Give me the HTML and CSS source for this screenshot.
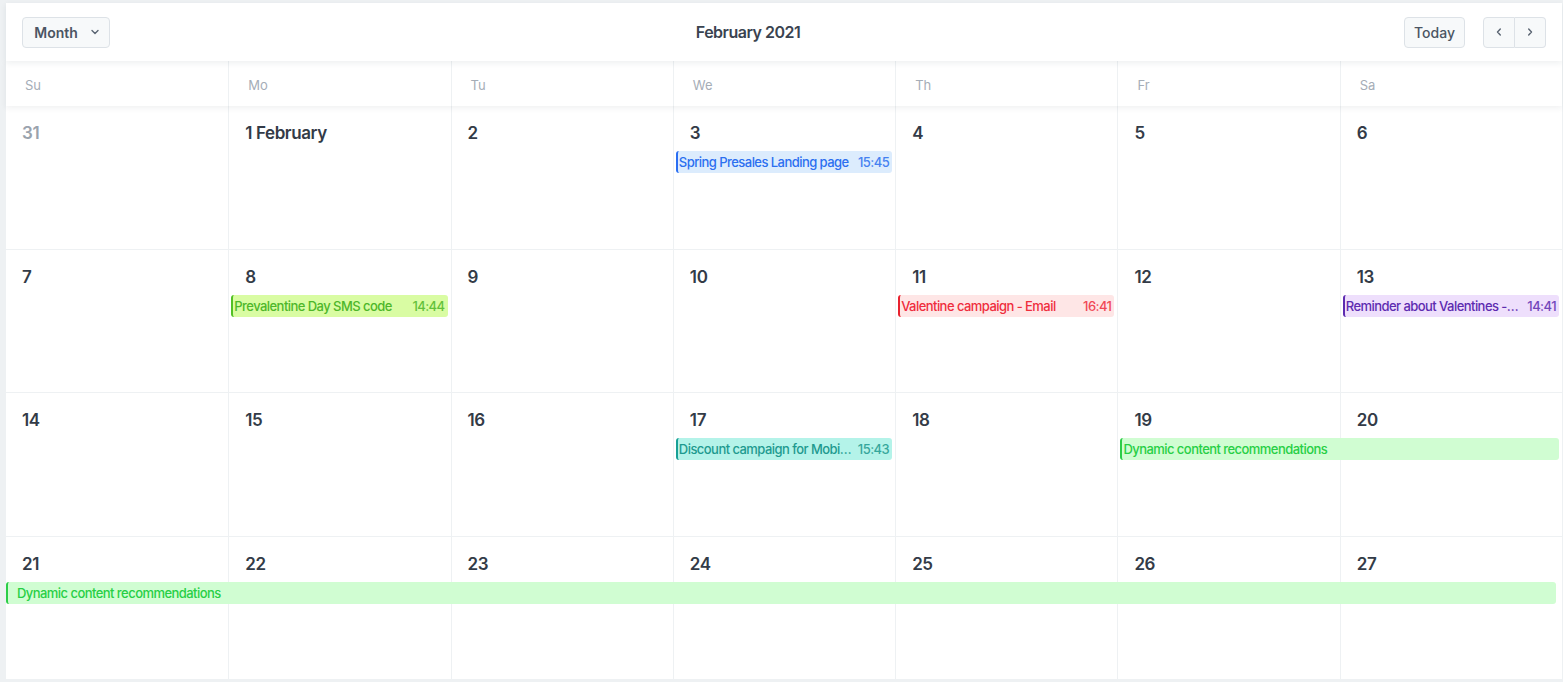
FILE: index.html
```html
<!DOCTYPE html>
<html lang="en">
<head>
<meta charset="utf-8">
<title>Campaign calendar</title>
<link rel="stylesheet" href="styles.css">
</head>
<body>
<div class="calendar">
  <header class="toolbar">
    <button class="btn btn-view">Month
      <svg class="chev" width="10" height="10" viewBox="0 0 10 10"><path d="M2 3.5 L5 6.5 L8 3.5" fill="none" stroke="currentColor" stroke-width="1.4" stroke-linecap="round" stroke-linejoin="round"/></svg>
    </button>
    <h1 class="title">February 2021</h1>
    <div class="actions">
      <button class="btn btn-today">Today</button>
      <div class="nav">
        <button class="btn nav-btn" aria-label="Previous"><svg width="10" height="10" viewBox="0 0 10 10"><path d="M6.3 2 L3.5 5 L6.3 8" fill="none" stroke="currentColor" stroke-width="1.4" stroke-linecap="round" stroke-linejoin="round"/></svg></button>
        <button class="btn nav-btn" aria-label="Next"><svg width="10" height="10" viewBox="0 0 10 10"><path d="M3.7 2 L6.5 5 L3.7 8" fill="none" stroke="currentColor" stroke-width="1.4" stroke-linecap="round" stroke-linejoin="round"/></svg></button>
      </div>
    </div>
  </header>

  <div class="weekdays">
    <div class="wd">Su</div><div class="wd">Mo</div><div class="wd">Tu</div><div class="wd">We</div><div class="wd">Th</div><div class="wd">Fr</div><div class="wd">Sa</div>
  </div>

  <div class="weeks">
    <div class="week">
      <div class="day c1"><span class="num muted">31</span></div>
      <div class="day c2"><span class="num">1 February</span></div>
      <div class="day c3"><span class="num">2</span></div>
      <div class="day c4"><span class="num">3</span></div>
      <div class="day c5"><span class="num">4</span></div>
      <div class="day c6"><span class="num">5</span></div>
      <div class="day c7"><span class="num">6</span></div>
      <div class="event blue c4"><span class="ev-title">Spring Presales Landing page</span><span class="ev-time">15:45</span></div>
    </div>

    <div class="week">
      <div class="day c1"><span class="num">7</span></div>
      <div class="day c2"><span class="num">8</span></div>
      <div class="day c3"><span class="num">9</span></div>
      <div class="day c4"><span class="num">10</span></div>
      <div class="day c5"><span class="num">11</span></div>
      <div class="day c6"><span class="num">12</span></div>
      <div class="day c7"><span class="num">13</span></div>
      <div class="event lime c2"><span class="ev-title">Prevalentine Day SMS code</span><span class="ev-time">14:44</span></div>
      <div class="event red c5"><span class="ev-title">Valentine campaign - Email</span><span class="ev-time">16:41</span></div>
      <div class="event purple c7"><span class="ev-title">Reminder about Valentines - Push notification</span><span class="ev-time">14:41</span></div>
    </div>

    <div class="week">
      <div class="day c1"><span class="num">14</span></div>
      <div class="day c2"><span class="num">15</span></div>
      <div class="day c3"><span class="num">16</span></div>
      <div class="day c4"><span class="num">17</span></div>
      <div class="day c5"><span class="num">18</span></div>
      <div class="day c6"><span class="num">19</span></div>
      <div class="day c7"><span class="num">20</span></div>
      <div class="event teal c4"><span class="ev-title">Discount campaign for Mobile app users</span><span class="ev-time">15:43</span></div>
      <div class="event green c6 span2"><span class="ev-title">Dynamic content recommendations</span></div>
    </div>

    <div class="week">
      <div class="day c1"><span class="num">21</span></div>
      <div class="day c2"><span class="num">22</span></div>
      <div class="day c3"><span class="num">23</span></div>
      <div class="day c4"><span class="num">24</span></div>
      <div class="day c5"><span class="num">25</span></div>
      <div class="day c6"><span class="num">26</span></div>
      <div class="day c7"><span class="num">27</span></div>
      <div class="event green continued c1 span7"><span class="ev-title">Dynamic content recommendations</span></div>
    </div>
  </div>
</div>
</body>
</html>
```

FILE: styles.css
```css
* { box-sizing: border-box; }

html, body {
  margin: 0;
  height: 100%;
}

body {
  background: #eef1f3;
  font-family: Inter, "Noto Sans", "Liberation Sans", sans-serif;
  color: #323a46;
  overflow: hidden;
}

.calendar {
  margin: 3px 1px 0 6px;
  background: #fff;
}

/* toolbar */
.toolbar {
  position: relative;
  z-index: 3;
  height: 58px;
  display: flex;
  align-items: center;
  justify-content: space-between;
  padding: 0 16px 0 16px;
  background: #fff;
  box-shadow: 0 2px 6px rgba(30, 45, 60, 0.08);
}

.title {
  margin: 0 18px 0 0;
  font-size: 16px;
  font-weight: 600;
  color: #3a4350;
  letter-spacing: -0.5px;
}

.btn {
  font-family: inherit;
  height: 31px;
  border: 1px solid #dde2e7;
  border-radius: 4px;
  background: #f7f9fa;
  color: #4b5563;
  font-size: 14px;
  display: inline-flex;
  align-items: center;
  justify-content: center;
  padding: 0;
  cursor: pointer;
}

.btn-view {
  width: 88px;
  font-weight: 600;
  gap: 12px;
  padding-left: 2px;
}

.chev { color: #5a6472; }

.actions {
  display: flex;
  align-items: center;
  gap: 18px;
}

.btn-today {
  width: 61px;
  font-weight: 500;
}

.nav {
  display: flex;
}

.nav-btn {
  width: 32px;
  color: #5a6472;
}

.nav-btn:first-child {
  border-radius: 4px 0 0 4px;
}

.nav-btn:last-child {
  border-radius: 0 4px 4px 0;
  border-left: none;
  width: 31px;
}

/* weekday header */
.weekdays {
  position: relative;
  z-index: 2;
  display: grid;
  grid-template-columns: repeat(7, 1fr);
  height: 45px;
  background: #fff;
  box-shadow: 0 2px 6px rgba(30, 45, 60, 0.07);
}

.wd {
  display: flex;
  align-items: center;
  padding: 2px 0 0 19px;
  font-size: 13px;
  color: #a5adb7;
  border-left: 1px solid #eef1f3;
}

.wd:first-child { border-left: none; }

/* month grid */
.week {
  display: grid;
  grid-template-columns: repeat(7, 1fr);
  grid-template-rows: 45px 22px 1fr;
  height: 143.6px;
  border-bottom: 1px solid #eef1f3;
}

.day {
  grid-row: 1 / 4;
  padding: 16px 0 0 16px;
  border-left: 1px solid #eef1f3;
}

.day.c1 { border-left: none; }

.num {
  font-size: 17px;
  font-weight: 600;
  line-height: 22px;
  letter-spacing: -0.4px;
  color: #333b47;
}

.num.muted { color: #9aa3ad; }

.c1 { grid-column: 1; }
.c2 { grid-column: 2; }
.c3 { grid-column: 3; }
.c4 { grid-column: 4; }
.c5 { grid-column: 5; }
.c6 { grid-column: 6; }
.c7 { grid-column: 7; }

.event.span2 { grid-column-end: span 2; }
.event.span7 { grid-column-end: span 7; }

.event {
  grid-row: 2;
  z-index: 1;
  display: flex;
  align-items: center;
  min-width: 0;
  margin: 0 3px;
  padding: 0 3px 0 1px;
  border-left: 2px solid;
  border-radius: 3px;
  font-size: 13px;
  font-weight: 500;
  letter-spacing: -0.55px;
  white-space: nowrap;
}

.ev-title {
  flex: 1;
  min-width: 0;
  overflow: hidden;
  text-overflow: ellipsis;
}

.ev-time {
  flex: none;
  margin-left: 6px;
  opacity: 0.85;
}

.event.continued {
  margin: 0 6px 0 0;
  padding-left: 9px;
}

.blue   { background: #dcecfd; color: #2b6ff0; border-left-color: #2a6ef2; }
.lime   { background: #d9fca3; color: #4eb72a; border-left-color: #52c025; }
.red    { background: #fee6e6; color: #ef2d3d; border-left-color: #e8222f; }
.purple { background: #eedffc; color: #5d2bb0; border-left-color: #5d2bb0; }
.teal   { background: #b4f3e9; color: #1e9a8f; border-left-color: #17a096; }
.green  { background: #d0fdd2; color: #27cf45; border-left-color: #2ccd48; }
```
